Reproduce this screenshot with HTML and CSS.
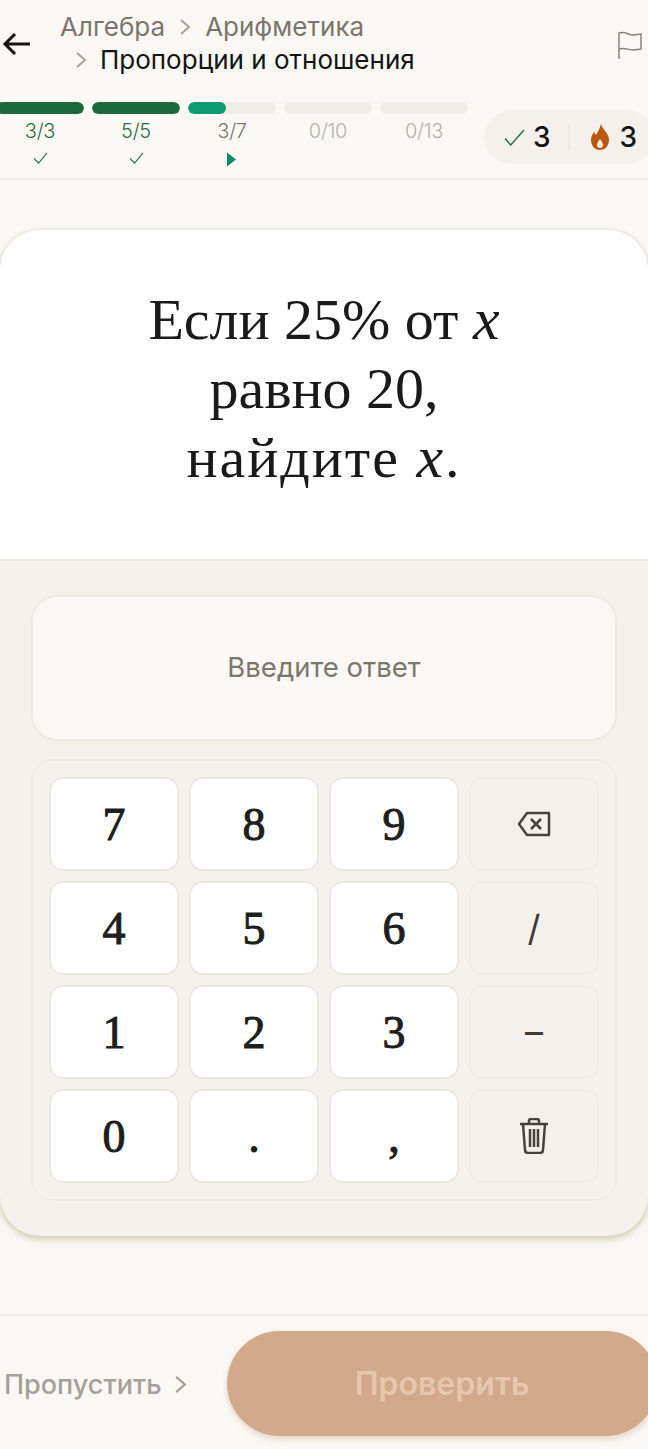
FILE: index.html
```html
<!DOCTYPE html>
<html lang="ru">
<head>
  <meta charset="utf-8">
  <title>Пропорции и отношения</title>
  <link rel="stylesheet" href="styles.css">
</head>
<body>
  <header class="topbar">
    <svg class="back" viewBox="0 0 30 30"><path d="M28 15H3M13 5 3 15l10 10"/></svg>
    <div class="crumbs">
      <div class="crumb-line">
        <span>Алгебра</span>
        <svg class="chev" viewBox="0 0 12 18"><path d="m2 2 8 7-8 7"/></svg>
        <span>Арифметика</span>
      </div>
      <div class="crumb-line crumb-current">
        <svg class="chev" viewBox="0 0 12 18"><path d="m2 2 8 7-8 7"/></svg>
        <span>Пропорции и отношения</span>
      </div>
    </div>
    <svg class="flag" viewBox="0 0 26 30"><path d="M2 29V3c7-2 9 2 14 2 3 0 5-1 8-1v15c-3 0-5 1-8 1-5 0-8-3-14-1"/></svg>
  </header>

  <section class="progress-row">
    <div class="steps">
      <div class="step done">
        <div class="bar"><div class="fill" style="width: 100%"></div></div>
        <div class="step-num">3/3</div>
        <svg class="tick" viewBox="0 0 16 14"><path d="m1 7 5 5 9-11"/></svg>
      </div>
      <div class="step done">
        <div class="bar"><div class="fill" style="width: 100%"></div></div>
        <div class="step-num">5/5</div>
        <svg class="tick" viewBox="0 0 16 14"><path d="m1 7 5 5 9-11"/></svg>
      </div>
      <div class="step active">
        <div class="bar"><div class="fill" style="width: 43%"></div></div>
        <div class="step-num">3/7</div>
        <svg class="play" viewBox="0 0 10 14"><path d="M0 0v14l9-7z"/></svg>
      </div>
      <div class="step">
        <div class="bar"></div>
        <div class="step-num">0/10</div>
      </div>
      <div class="step">
        <div class="bar"></div>
        <div class="step-num">0/13</div>
      </div>
    </div>
    <div class="stats">
      <svg class="stat-check" viewBox="0 0 22 18"><path d="m1 10 6 7L21 1"/></svg>
      <span class="stat-val">3</span>
      <span class="stat-sep"></span>
      <svg class="stat-fire" viewBox="0 0 20 26">
        <path fill="#b9580f" d="M11 0c1 5 8 9 8 16 0 6-4 10-9 10s-9-4-9-10c0-3 1-5 3-8 1 1 1 2 2 3 2-3 4-7 5-11z"/>
        <path fill="#f6ead9" d="M10 15c1.500 2 3 4 3 6 0 2-1.500 3-3 3s-3-1-3-3c0-2 1.500-4 3-6z"/>
      </svg>
      <span class="stat-val">3</span>
    </div>
  </section>

  <main class="card">
    <div class="question">
      Если 25% от <i class="var">x</i><br>равно 20,<br><span class="q-wide">найдите <i class="var">x</i>.</span>
    </div>
    <div class="answer-area">
      <div class="answer-box">Введите ответ</div>
      <div class="keypad">
        <button class="key">7</button>
        <button class="key">8</button>
        <button class="key">9</button>
        <button class="key key-side">
          <svg class="icon-back" viewBox="0 0 34 26"><path d="M10 2h22v22H10L2 13zM14 8l10 10M24 8 14 18"/></svg>
        </button>
        <button class="key">4</button>
        <button class="key">5</button>
        <button class="key">6</button>
        <button class="key key-side key-op">/</button>
        <button class="key">1</button>
        <button class="key">2</button>
        <button class="key">3</button>
        <button class="key key-side key-op">–</button>
        <button class="key">0</button>
        <button class="key">.</button>
        <button class="key">,</button>
        <button class="key key-side">
          <svg class="icon-trash" viewBox="0 0 30 36"><path d="M1 6h28M10 5V3q0-2 2-2h6q2 0 2 2v2M4 6l2 26q0 3 3 3h12q3 0 3-3l2-26M11 11v18M15 11v18M19 11v18"/></svg>
        </button>
      </div>
    </div>
  </main>

  <footer class="bottombar">
    <div class="skip">
      <span>Пропустить</span>
      <svg class="skip-chev" viewBox="0 0 12 18"><path d="m2 2 8 7-8 7"/></svg>
    </div>
    <button class="check-btn">Проверить</button>
  </footer>
</body>
</html>
```

FILE: styles.css
```css
* {
  box-sizing: border-box;
}

html,
body {
  height: 1449px;
  overflow: hidden;
}

body {
  margin: 0;
  background-color: #faf8f5;
  font-family: Inter, "Liberation Sans", sans-serif;
  color: #141414;
}

/* top bar */
.topbar {
  height: 98px;
  display: flex;
  align-items: flex-start;
  padding: 10px 5px 0 2px;
}

.back {
  width: 30px;
  height: 30px;
  margin-top: 19px;
  fill: none;
  stroke: #141414;
  stroke-width: 3;
}

.crumbs {
  flex: 1;
  margin-left: 28px;
  font-size: 26px;
  line-height: 33px;
  color: #7c756d;
}

.crumb-line {
  display: flex;
  align-items: center;
  gap: 14px;
}

.crumb-current {
  padding-left: 15px;
  gap: 13px;
  color: #141414;
}

.chev {
  width: 12px;
  height: 18px;
  fill: none;
  stroke: #a8a29b;
  stroke-width: 2;
}

.flag {
  width: 26px;
  height: 30px;
  margin-top: 20px;
  fill: none;
  stroke: #8a847c;
  stroke-width: 1.500;
}

/* progress */
.progress-row {
  height: 82px;
  display: flex;
  align-items: flex-start;
  border-bottom: 2px solid #efece6;
}

.steps {
  display: flex;
  gap: 8px;
  margin-left: -4px;
  padding-top: 4px;
}

.step {
  width: 88px;
  display: flex;
  flex-direction: column;
  align-items: center;
  color: #b5b0a8;
}

.bar {
  width: 100%;
  height: 12px;
  border-radius: 6px;
  background-color: #f0ede7;
  overflow: hidden;
}

.fill {
  height: 100%;
  border-radius: 6px;
}

.done .fill {
  background-color: #1a6a3c;
}

.active .fill {
  background-color: #0f9a72;
}

.step-num {
  margin-top: 4px;
  font-size: 20px;
  line-height: 26px;
  font-weight: 300;
  letter-spacing: -0.3px;
}

.done .step-num {
  color: #2c6e47;
}

.active .step-num {
  color: #7c756d;
}

.tick {
  width: 15px;
  height: 13px;
  margin-top: 8px;
  fill: none;
  stroke: #2c6e47;
  stroke-width: 1.200;
}

.play {
  width: 10px;
  height: 15px;
  margin-top: 8px;
  fill: #0f8a68;
}

.stats {
  width: 170px;
  height: 54px;
  margin: 12px 0 0 16px;
  flex-shrink: 0;
  display: flex;
  align-items: center;
  padding-left: 20px;
  border-radius: 27px;
  background-color: #f4f1ec;
}

.stat-check {
  width: 21px;
  height: 17px;
  fill: none;
  stroke: #2c6e47;
  stroke-width: 1.500;
}

.stat-val {
  margin-left: 8px;
  font-size: 28px;
  font-weight: 500;
}

.stat-sep {
  width: 2px;
  height: 26px;
  margin: 0 20px 0 17px;
  background-color: #ece8e2;
}

.stat-fire {
  width: 20px;
  height: 26px;
}

.stat-fire + .stat-val {
  margin-left: 10px;
}

/* card */
.card {
  margin: 50px 0 0;
  height: 1006px;
  border-radius: 40px;
  background-color: #f4f1ec;
  overflow: hidden;
  box-shadow: 0 3px 6px rgba(170, 165, 110, 0.55), 0 -1px 3px rgba(0, 0, 0, 0.06);
}

.question {
  height: 331px;
  padding-top: 55px;
  background-color: #fff;
  border-bottom: 2px solid #ebe8e2;
  text-align: center;
  font-family: "Liberation Serif", serif;
  font-size: 58px;
  line-height: 69px;
  color: #1a1a1a;
}

.q-wide {
  letter-spacing: 2px;
}

.var {
  font-size: 60px;
}

.answer-area {
  padding: 34px 31px 0;
}

.answer-box {
  height: 146px;
  padding-bottom: 3px;
  display: flex;
  align-items: center;
  justify-content: center;
  border: 2px solid #ece8e2;
  border-radius: 26px;
  background-color: #faf8f5;
  font-size: 27.500px;
  color: #7c756d;
}

.keypad {
  margin-top: 18px;
  padding: 16px;
  display: grid;
  grid-template-columns: repeat(4, 130px);
  grid-auto-rows: 94px;
  gap: 10px;
  border: 2px solid #efebe5;
  border-radius: 22px;
}

.key {
  padding: 0;
  display: flex;
  align-items: center;
  justify-content: center;
  border: 2px solid #ece8e2;
  border-radius: 14px;
  background-color: #fff;
  font-family: "Liberation Serif", serif;
  font-size: 46px;
  -webkit-text-stroke: 1px #1e1e1e;
  color: #1e1e1e;
}

.key-side {
  background-color: #f4f1ec;
  border-color: #efebe5;
}

.key-op {
  font-family: Inter, "Liberation Sans", sans-serif;
  font-size: 36px;
  -webkit-text-stroke: 0;
  color: #3f3b37;
}

.icon-back {
  width: 34px;
  height: 26px;
  fill: none;
  stroke: #46423d;
  stroke-width: 2.500;
  stroke-linejoin: round;
}

.icon-trash {
  width: 30px;
  height: 36px;
  fill: none;
  stroke: #46423d;
  stroke-width: 2.500;
}

/* bottom */
.bottombar {
  height: 135px;
  margin-top: 78px;
  display: flex;
  align-items: flex-start;
  padding-top: 15px;
  border-top: 2px solid #efece6;
}

.skip {
  height: 106px;
  padding-left: 4px;
  display: flex;
  align-items: center;
  gap: 12px;
  font-size: 27px;
  font-weight: 500;
  color: #a5a09a;
}

.skip-chev {
  width: 13px;
  height: 21px;
  fill: none;
  stroke: #a5a09a;
  stroke-width: 2;
}

.check-btn {
  width: 431px;
  height: 105px;
  margin-left: 40px;
  flex-shrink: 0;
  border: none;
  border-radius: 53px;
  background-color: #d2a98a;
  box-shadow: 0 3px 6px rgba(200, 160, 130, 0.4);
  font-family: Inter, "Liberation Sans", sans-serif;
  font-size: 32px;
  font-weight: 600;
  color: #e6c7ae;
}
```
